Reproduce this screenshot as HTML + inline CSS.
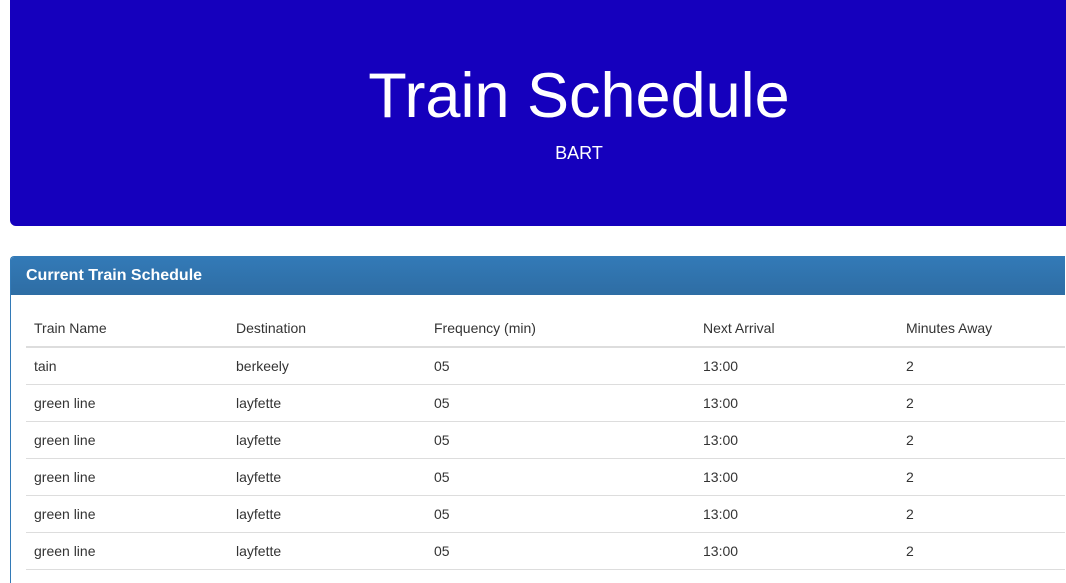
<!DOCTYPE html>
<html><head><style>
html,body{margin:0;height:583px;overflow:hidden}
body{font-family:"Liberation Sans",Arial,sans-serif;font-size:14px;color:#333;background:#fff;width:1066px;position:relative}
.jum{position:absolute;left:10px;top:0;width:1056px;height:226px;background:#1500bd;border-radius:0 0 0 6px;color:#fff;text-align:center}
.jum h1{margin:0;position:absolute;top:60px;left:0;width:1138px;font-size:63px;font-weight:normal;line-height:72px}
.jum p{margin:0;position:absolute;top:143px;left:0;width:1138px;font-size:18px;line-height:20px}
.panel{position:absolute;left:10px;top:256px;width:1055px;height:327px;border:1px solid #337ab7;border-right:0;border-bottom:0;border-radius:4px 0 0 0;overflow:hidden;box-sizing:border-box}
.ph{height:38px;background:linear-gradient(#337ab7,#2e6da4);color:#fff;font-weight:bold;font-size:16px;line-height:37px;padding-left:15px}
table{position:absolute;left:15px;top:53px;border-collapse:collapse;width:1100px}
th,td{text-align:left;font-weight:normal;padding:8px;line-height:20px;height:20px}
th{border-bottom:2px solid #ddd}
td{border-top:1px solid #ddd}
</style></head><body>
<div class="jum"><h1>Train Schedule</h1><p>BART</p></div>
<div class="panel"><div class="ph">Current Train Schedule</div>
<table>
<colgroup><col style="width:202px"><col style="width:198px"><col style="width:269px"><col style="width:203px"><col></colgroup>
<tr><th>Train Name</th><th>Destination</th><th>Frequency (min)</th><th>Next Arrival</th><th>Minutes Away</th></tr>
<tr><td>tain</td><td>berkeely</td><td>05</td><td>13:00</td><td>2</td></tr>
<tr><td>green line</td><td>layfette</td><td>05</td><td>13:00</td><td>2</td></tr>
<tr><td>green line</td><td>layfette</td><td>05</td><td>13:00</td><td>2</td></tr>
<tr><td>green line</td><td>layfette</td><td>05</td><td>13:00</td><td>2</td></tr>
<tr><td>green line</td><td>layfette</td><td>05</td><td>13:00</td><td>2</td></tr>
<tr><td>green line</td><td>layfette</td><td>05</td><td>13:00</td><td>2</td></tr>
<tr><td>green line</td><td>layfette</td><td>05</td><td>13:00</td><td>2</td></tr>
</table></div>
</body></html>
